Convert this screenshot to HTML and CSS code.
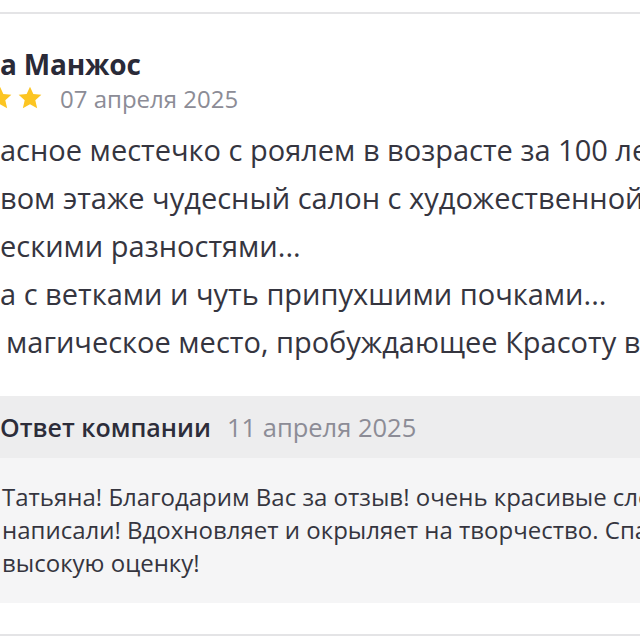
FILE: index.html
```html
<!DOCTYPE html>
<html lang="ru">
<head>
<meta charset="utf-8">
<title>Отзыв</title>
<link rel="stylesheet" href="styles.css">
</head>
<body>
<div class="page">
  <div class="divider"></div>
  <div class="review">
    <div class="author">а Манжос</div>
    <div class="meta">
      <span class="stars">
        <svg class="star" viewBox="0 0 24 24"><path d="M12 1.5l3.1 6.9 7.4.7-5.6 5 1.7 7.4L12 17.7l-6.6 3.8 1.7-7.4-5.6-5 7.4-.7z"/></svg>
        <svg class="star" viewBox="0 0 24 24"><path d="M12 1.5l3.1 6.9 7.4.7-5.6 5 1.7 7.4L12 17.7l-6.6 3.8 1.7-7.4-5.6-5 7.4-.7z"/></svg>
      </span>
      <span class="date">07 апреля 2025</span>
    </div>
    <div class="text">
      <span class="line">асное местечко с роялем в возрасте за 100 лет!</span>
      <span class="line">вом этаже чудесный салон с художественной</span>
      <span class="line">ескими разностями...</span>
      <span class="line">а с ветками и чуть припухшими почками...</span>
      <span class="line indent">магическое место, пробуждающее Красоту в</span>
    </div>
    <div class="reply">
      <div class="reply-head">
        <span class="reply-title">Ответ компании</span>
        <span class="reply-date">11 апреля 2025</span>
      </div>
      <div class="reply-body">
        <span class="line">Татьяна! Благодарим Вас за отзыв! очень красивые слова</span>
        <span class="line">написали! Вдохновляет и окрыляет на творчество. Спасибо</span>
        <span class="line">высокую оценку!</span>
      </div>
    </div>
  </div>
  <div class="divider"></div>
</div>
</body>
</html>
```

FILE: styles.css
```css
html, body {
  margin: 0;
  padding: 0;
  background: #ffffff;
  overflow: hidden;
}
.page {
  width: 640px;
  height: 640px;
  overflow: hidden;
  padding-top: 12px;
  box-sizing: border-box;
  font-family: "Open Sans", "Noto Sans", sans-serif;
  color: #33333d;
}
.divider {
  height: 2px;
  background: #e4e4e6;
}
.review {
  padding-top: 32px;
  height: 620px;
  box-sizing: border-box;
}
.author {
  font-size: 28px;
  font-weight: 700;
  line-height: 36px;
  color: #2a2a38;
  white-space: nowrap;
  letter-spacing: -0.2px;
}
.meta {
  display: flex;
  align-items: center;
  height: 36px;
  margin-top: -2px;
  white-space: nowrap;
}
.stars {
  display: flex;
  gap: 4px;
  margin-left: -13px;
  margin-right: 17px;
}
.star {
  width: 26px;
  height: 26px;
  fill: #fcc522;
}
.date {
  font-size: 24px;
  color: #8c8c96;
}
.text {
  margin-top: 10px;
  font-size: 29px;
  line-height: 48px;
  white-space: nowrap;
  color: #35353f;
}
.line {
  display: block;
}
.indent {
  padding-left: 6px;
}
.reply {
  margin-top: 30px;
}
.reply-head {
  display: flex;
  align-items: center;
  gap: 16px;
  height: 62px;
  background: #ededee;
  white-space: nowrap;
}
.reply-title {
  font-size: 25px;
  font-weight: 600;
  color: #2d2d3a;
}
.reply-date {
  font-size: 25.5px;
  color: #8c8c96;
}
.reply-body {
  background: #f5f5f6;
  padding: 22px 0 24px 2px;
  font-size: 24px;
  line-height: 33px;
  white-space: nowrap;
  color: #35353f;
}
```
